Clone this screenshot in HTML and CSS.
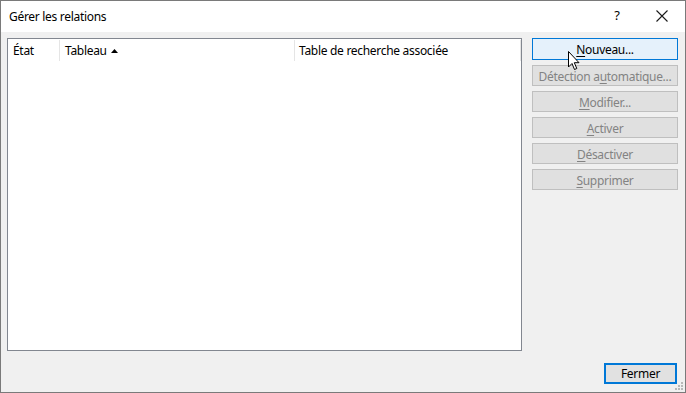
FILE: index.html
```html
<!DOCTYPE html>
<html lang="fr">
<head>
  <meta charset="UTF-8">
  <title>Gérer les relations</title>
  <link rel="stylesheet" href="styles.css">
</head>
<body>
  <div class="dialog">
    <div class="titlebar">
      <span class="title">Gérer les relations</span>
      <span class="tb-help">?</span>
      <span class="tb-close">
        <svg width="12" height="12" viewBox="0 0 12 12"><path d="M0.5 0.5 L11.5 11.5 M11.5 0.5 L0.5 11.5" stroke="#1a1a1a" stroke-width="1.1" fill="none"/></svg>
      </span>
    </div>
    <div class="content">
      <div class="main">
        <div class="list">
          <div class="list-head">
            <div class="col col-state">État</div>
            <div class="col col-table">Tableau <svg class="sort" width="7" height="4" viewBox="0 0 7 4"><path d="M0 4 L3.5 0 L7 4 Z" fill="#000"/></svg></div>
            <div class="col col-lookup">Table de recherche associée</div>
          </div>
        </div>
        <div class="actions">
          <button class="btn btn-hot"><u>N</u>ouveau...</button>
          <button class="btn" disabled>Détection a<u>u</u>tomatique...</button>
          <button class="btn" disabled><u>M</u>odifier...</button>
          <button class="btn" disabled><u>A</u>ctiver</button>
          <button class="btn" disabled><u>D</u>ésactiver</button>
          <button class="btn" disabled><u>S</u>upprimer</button>
        </div>
      </div>
      <div class="footer">
        <button class="btn btn-default">Fermer</button>
      </div>
    </div>
    <svg class="cursor" width="13" height="20" viewBox="0 0 13 20">
      <path d="M0.5 0.5 L0.5 16 L4 12.5 L6.5 18.5 L8.8 17.5 L6.3 11.7 L11 11.7 Z" fill="#fff" stroke="#000" stroke-width="1"/>
    </svg>
    <svg class="grip" width="10" height="10" viewBox="0 0 10 10">
      <g fill="#b8b8b8">
        <rect x="7" y="1" width="2" height="2"/>
        <rect x="4" y="4" width="2" height="2"/><rect x="7" y="4" width="2" height="2"/>
        <rect x="1" y="7" width="2" height="2"/><rect x="4" y="7" width="2" height="2"/><rect x="7" y="7" width="2" height="2"/>
      </g>
    </svg>
  </div>
</body>
</html>
```

FILE: styles.css
```css
html, body {
  margin: 0;
  padding: 0;
}

body {
  font-family: 'Segoe UI', 'Noto Sans', 'Open Sans', sans-serif;
  font-size: 12px;
  letter-spacing: -0.3px;
  color: #000;
  background: #fff;
}

.dialog {
  position: relative;
  width: 686px;
  height: 393px;
  box-sizing: border-box;
  border: 1px solid #7a7a7a;
  display: flex;
  flex-direction: column;
  background: #f0f0f0;
  overflow: hidden;
}

.titlebar {
  height: 31px;
  flex: none;
  background: #fff;
  display: flex;
  align-items: center;
  padding-left: 8px;
}

.title {
  flex: 1;
  font-size: 12px;
}

.tb-help {
  width: 44px;
  text-align: center;
  font-size: 13px;
  margin-right: 1px;
  padding-bottom: 3px;
}

.tb-close {
  width: 44px;
  display: flex;
  justify-content: center;
  margin-right: 1px;
  padding-bottom: 1px;
}

.content {
  flex: 1;
  display: flex;
  flex-direction: column;
  padding: 6px 7px 8px 6px;
}

.main {
  flex: 1;
  display: flex;
  gap: 10px;
}

.list {
  width: 515px;
  height: 313px;
  box-sizing: border-box;
  border: 1px solid #828790;
  background: #fff;
}

.list-head {
  display: flex;
  height: 21px;
  padding-top: 1px;
}

.col {
  line-height: 20px;
  padding-top: 1px;
  padding-left: 5px;
  box-sizing: border-box;
  border-right: 1px solid #e5e5e5;
  height: 21px;
}

.col-state {
  width: 52px;
}

.col-table {
  width: 235px;
}

.col-lookup {
  width: 226px;
  padding-left: 4px;
}

.sort {
  vertical-align: 2px;
  margin-left: 1px;
}

.actions {
  width: 146px;
  display: flex;
  flex-direction: column;
  gap: 5px;
}

.btn {
  font-family: inherit;
  font-size: 12px;
  letter-spacing: -0.3px;
  height: 21px;
  padding: 1px 0 0;
  box-sizing: border-box;
  border: 1px solid #adadad;
  background: #e1e1e1;
  color: #000;
  text-align: center;
  line-height: 17px;
}

.btn u {
  text-underline-offset: 2px;
}

.btn:disabled {
  border-color: #bfbfbf;
  background: #e0e0e0;
  color: #838383;
}

.btn-hot {
  height: 22px;
  border-color: #0078d7;
  background: #e5f1fb;
}

.footer {
  display: flex;
  justify-content: flex-end;
  padding-top: 12px;
  padding-right: 1px;
}

.btn-default {
  width: 73px;
  height: 21px;
  border: 2px solid #0078d7;
  line-height: 16px;
  padding-top: 0;
}

.cursor {
  position: absolute;
  left: 567px;
  top: 50px;
}

.grip {
  position: absolute;
  right: 1px;
  bottom: 1px;
}
```
